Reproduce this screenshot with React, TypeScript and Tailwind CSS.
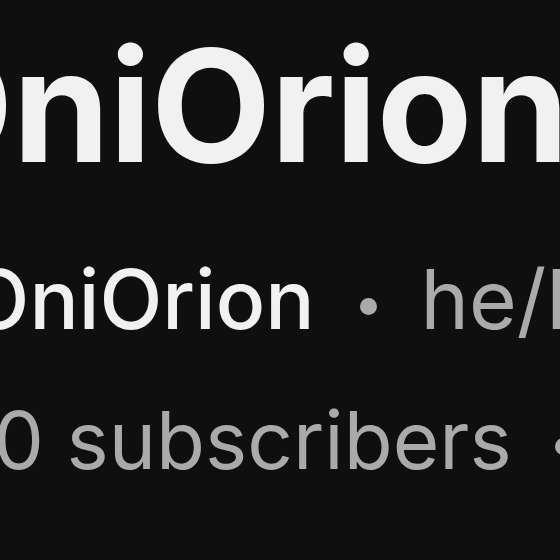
export default function App() {
  return (
    <div className="h-[560px] w-[560px] overflow-hidden bg-[#0f0f0f] font-['Inter','Liberation_Sans',sans-serif]">
      <div className="flex flex-col whitespace-nowrap">
        <h1 className="-ml-[107px] mt-[16px] text-[156px] leading-[180px] font-bold tracking-[-0.5px] text-[#f1f1f1]">
          OniOrion
        </h1>
        <div className="-ml-[114px] mt-[44px] text-[82px] leading-[120px]">
          <span className="font-medium text-[#f1f1f1]">@OniOrion</span>
          <span className="mb-[14px] ml-[45px] inline-block h-[17px] w-[17px] rounded-full bg-[#aaaaaa] align-baseline" />
          <span className="ml-[44px] text-[#aaaaaa]">he/him</span>
        </div>
        <div className="-ml-[39px] mt-[20px] text-[80px] leading-[120px] text-[#aaaaaa]">
          <span>10 subscribers</span>
          <span className="mb-[14px] ml-[43px] inline-block h-[17px] w-[17px] rounded-full bg-[#aaaaaa] align-baseline" />
          <span className="ml-[40px]">5 videos</span>
        </div>
      </div>
    </div>
  );
}
